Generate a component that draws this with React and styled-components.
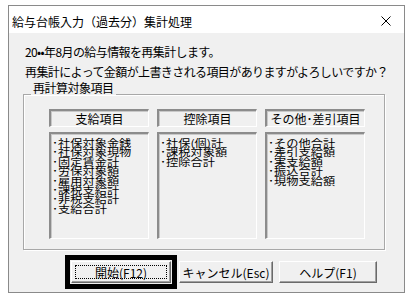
import React from 'react';
import styled, { createGlobalStyle } from 'styled-components';

const GlobalStyle = createGlobalStyle`
  body {
    margin: 0;
    background: #ffffff;
    font-family: "Noto Sans CJK JP", "Noto Sans", sans-serif;
    color: #000;
  }
`;

const Page = styled.div`
  width: 415px;
  height: 303px;
  padding: 5px 0 0 8px;
  box-sizing: border-box;
`;

const Window = styled.div`
  width: 397px;
  height: 288px;
  box-sizing: border-box;
  border: 1px solid #8a8a8a;
  background: #f0f0f0;
  display: flex;
  flex-direction: column;
`;

const TitleBar = styled.div`
  height: 27px;
  flex-shrink: 0;
  background: #ffffff;
  display: flex;
  align-items: center;
  justify-content: space-between;
  padding: 3px 13px 0 3px;
  box-sizing: border-box;
  font-size: 12px;
`;

const Body = styled.div`
  padding: 9px 19px 0 14px;
  display: flex;
  flex-direction: column;
`;

const Message = styled.div`
  padding-left: 2px;
  font-size: 12px;
  line-height: 20px;
  letter-spacing: -0.6px;
  white-space: nowrap;
`;

const Group = styled.fieldset`
  margin: -1px 0 0 0;
  padding: 2px 18px 10px 25px;
  border: 1px solid #a8a8a8;
  box-shadow: inset 1px 1px #ffffff, 1px 1px #ffffff;
  min-width: 0;
`;

const Legend = styled.legend`
  font-size: 12px;
  line-height: 14px;
  letter-spacing: -0.5px;
  padding: 0 2px 12px;
  margin-left: -18px;
`;

const Columns = styled.div`
  display: grid;
  grid-template-columns: repeat(3, 100px);
  column-gap: 8px;
  row-gap: 5px;
`;

const Sunken = styled.div`
  box-sizing: border-box;
  border-style: solid;
  border-width: 2px 1px 1px 2px;
  border-color: #8c8c8c #ffffff #ffffff #8c8c8c;
  box-shadow: inset 1px 1px #c8c8c8;
  background: #f0f0f0;
`;

const Header = styled(Sunken)`
  height: 18px;
  font-size: 12px;
  line-height: 15px;
  text-align: center;
  white-space: nowrap;
`;

const List = styled(Sunken)`
  height: 107px;
  padding: 4px 0 0 1px;
  overflow: hidden;
`;

const Items = styled.div`
  font-size: 10px;
  line-height: 9.4px;
  transform: scaleX(1.22);
  transform-origin: top left;
  white-space: nowrap;
`;

const ButtonRow = styled.div`
  display: flex;
  justify-content: flex-end;
  gap: 6px;
  margin: 11px 8px 0 0;
`;

const Button = styled.button`
  width: ${p => p.$w}px;
  height: 22px;
  box-sizing: border-box;
  padding: 0;
  font-family: inherit;
  font-size: 12px;
  color: #000;
  background: #f0f0f0;
  border-style: solid;
  border-width: 1px;
  border-color: #ffffff #6a6a6a #6a6a6a #ffffff;
  box-shadow: inset -1px -1px #a0a0a0;
  display: flex;
  align-items: center;
  justify-content: center;
  ${p => p.$default && `
    outline: 5px solid #000;
    outline-offset: 1px;
    margin-right: 2px;
  `}
`;

const Focus = styled.span`
  border: 1px dotted #000;
  width: calc(100% - 8px);
  height: calc(100% - 8px);
  display: flex;
  align-items: center;
  justify-content: center;
`;

const columns = [
  {
    title: '支給項目',
    items: ['社保対象金銭', '社保対象現物', '固定賃金計', '労保対象額', '雇用対象額', '課税支給計', '非税支給計', '支給合計'],
  },
  {
    title: '控除項目',
    items: ['社保(個)計', '課税対象額', '控除合計'],
  },
  {
    title: 'その他･差引項目',
    items: ['その他合計', '差引支給額', '実支給額', '振込合計', '現物支給額'],
  },
];

export default function App() {
  return (
    <Page>
      <GlobalStyle />
      <Window>
        <TitleBar>
          <span>給与台帳入力（過去分）集計処理</span>
          <svg width="10" height="10" viewBox="0 0 10 10">
            <path d="M0.5 0.5 L9.5 9.5 M9.5 0.5 L0.5 9.5" stroke="#000" strokeWidth="1" />
          </svg>
        </TitleBar>
        <Body>
          <Message>
            <div>20••年8月の給与情報を再集計します。</div>
            <div>再集計によって金額が上書きされる項目がありますがよろしいですか？</div>
          </Message>
          <Group>
            <Legend>再計算対象項目</Legend>
            <Columns>
              {columns.map(c => (
                <Header key={c.title}>{c.title}</Header>
              ))}
              {columns.map(c => (
                <List key={c.title + '-list'}>
                  <Items>
                    {c.items.map(i => (
                      <div key={i}>･{i}</div>
                    ))}
                  </Items>
                </List>
              ))}
            </Columns>
          </Group>
          <ButtonRow>
            <Button $w={100} $default>
              <Focus>開始(F12)</Focus>
            </Button>
            <Button $w={94}>キャンセル(Esc)</Button>
            <Button $w={98}>ヘルプ(F1)</Button>
          </ButtonRow>
        </Body>
      </Window>
    </Page>
  );
}
